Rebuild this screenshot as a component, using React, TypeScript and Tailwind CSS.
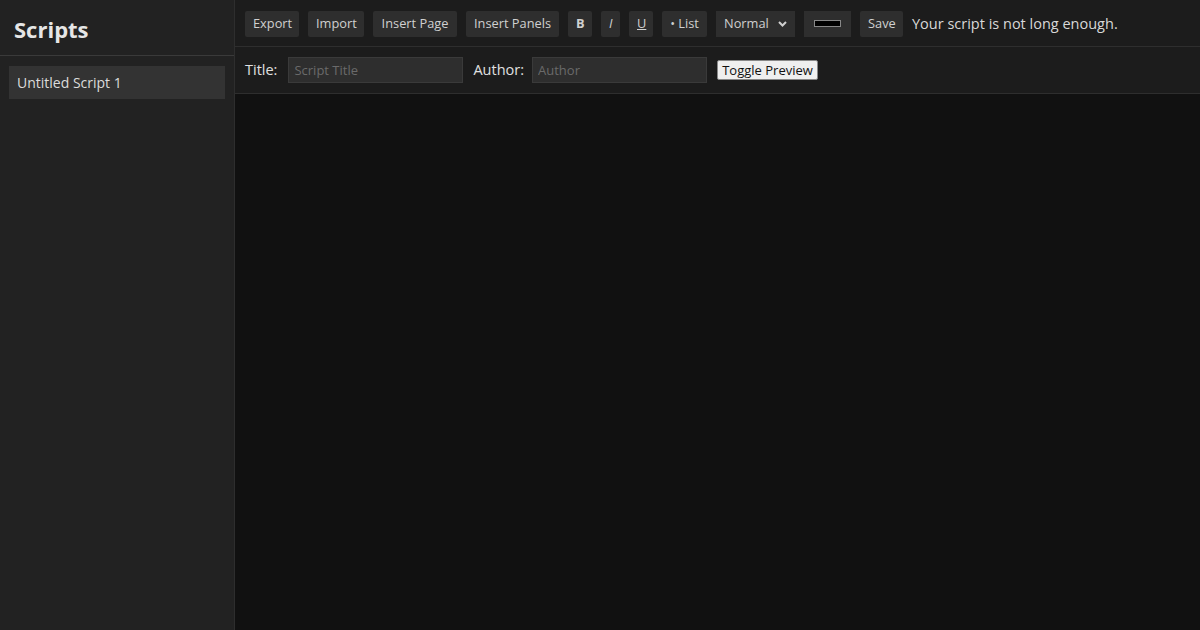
import React, { useState } from 'react';

const font = { fontFamily: '"Open Sans", "Noto Sans", sans-serif' };

const ToolButton: React.FC<{ children: React.ReactNode; className?: string }> = ({ children, className = '' }) => (
  <button className={`h-[26px] bg-[#2e2e2e] text-[#d0d0d0] text-[12.8px] px-[8px] rounded-[2px] ${className}`}>
    {children}
  </button>
);

export default function App() {
  const [title, setTitle] = useState('');
  const [author, setAuthor] = useState('');

  return (
    <div className="flex h-[630px] w-[1200px] bg-[#111111] text-[#dddddd] overflow-hidden" style={font}>
      {/* Sidebar */}
      <aside className="w-[235px] shrink-0 bg-[#222222] border-r border-[#2e2e2e] flex flex-col">
        <div className="h-[56px] border-b border-[#3a3a3a] flex items-center px-[14px] pt-[3px]">
          <h1 className="text-[22px] font-bold text-[#e6e6e6]">Scripts</h1>
        </div>
        <div className="px-[9px] pt-[10px]">
          <div className="h-[33px] bg-[#333333] flex items-center px-[8px] text-[14px] text-[#dcdcdc]">
            Untitled Script 1
          </div>
        </div>
      </aside>

      {/* Main */}
      <main className="flex-1 flex flex-col">
        <div className="h-[47px] bg-[#1c1c1c] border-b border-[#2e2e2e] flex items-center gap-[9px] px-[10px] pt-[1px]">
          <ToolButton className="w-[54px] px-0">Export</ToolButton>
          <ToolButton className="w-[56px] px-0">Import</ToolButton>
          <ToolButton className="w-[84px] px-0">Insert Page</ToolButton>
          <ToolButton className="w-[93px] px-0">Insert Panels</ToolButton>
          <ToolButton className="font-bold w-[24px] px-0">B</ToolButton>
          <ToolButton className="italic w-[19px] px-0">I</ToolButton>
          <ToolButton className="underline w-[24px] px-0">U</ToolButton>
          <ToolButton className="w-[45px] px-0">• List</ToolButton>
          <div className="h-[26px] w-[79px] bg-[#2e2e2e] flex items-center justify-between pl-[8px] pr-[8px] text-[12.8px] text-[#d0d0d0]">
            <span>Normal</span>
            <svg width="9" height="6" viewBox="0 0 9 6" fill="none" stroke="#d0d0d0" strokeWidth="2">
              <path d="M1 1l3.5 3.5L8 1" />
            </svg>
          </div>
          <div className="h-[26px] w-[47px] bg-[#2e2e2e] flex items-center justify-center">
            <div className="w-[27px] h-[7px] bg-black border border-[#888]" />
          </div>
          <ToolButton className="w-[43px] px-0">Save</ToolButton>
          <span className="text-[14.5px] text-[#d8d8d8]">Your script is not long enough.</span>
        </div>

        <div className="h-[47px] bg-[#1c1c1c] border-b border-[#2e2e2e] flex items-center px-[10px]">
          <label className="text-[14.5px] text-[#e0e0e0] mr-[11px]">Title:</label>
          <input
            value={title}
            onChange={(e) => setTitle(e.target.value)}
            placeholder="Script Title"
            className="h-[26px] w-[175px] bg-[#2e2e2e] border border-[#3a3a3a] px-[5px] text-[13px] text-[#ddd] placeholder:text-[#6a6a6a] outline-none"
            style={font}
          />
          <label className="text-[14.5px] text-[#e0e0e0] ml-[10px] mr-[8px]">Author:</label>
          <input
            value={author}
            onChange={(e) => setAuthor(e.target.value)}
            placeholder="Author"
            className="h-[26px] w-[175px] bg-[#2e2e2e] border border-[#3a3a3a] px-[5px] text-[13px] text-[#ddd] placeholder:text-[#6a6a6a] outline-none"
            style={font}
          />
          <button className="ml-[10px] h-[20px] w-[101px] bg-[#efefef] text-[#111] text-[13px] border border-[#888] rounded-[2px] leading-none">
            Toggle Preview
          </button>
        </div>

        <div className="flex-1 bg-[#111111]" />
      </main>
    </div>
  );
}
